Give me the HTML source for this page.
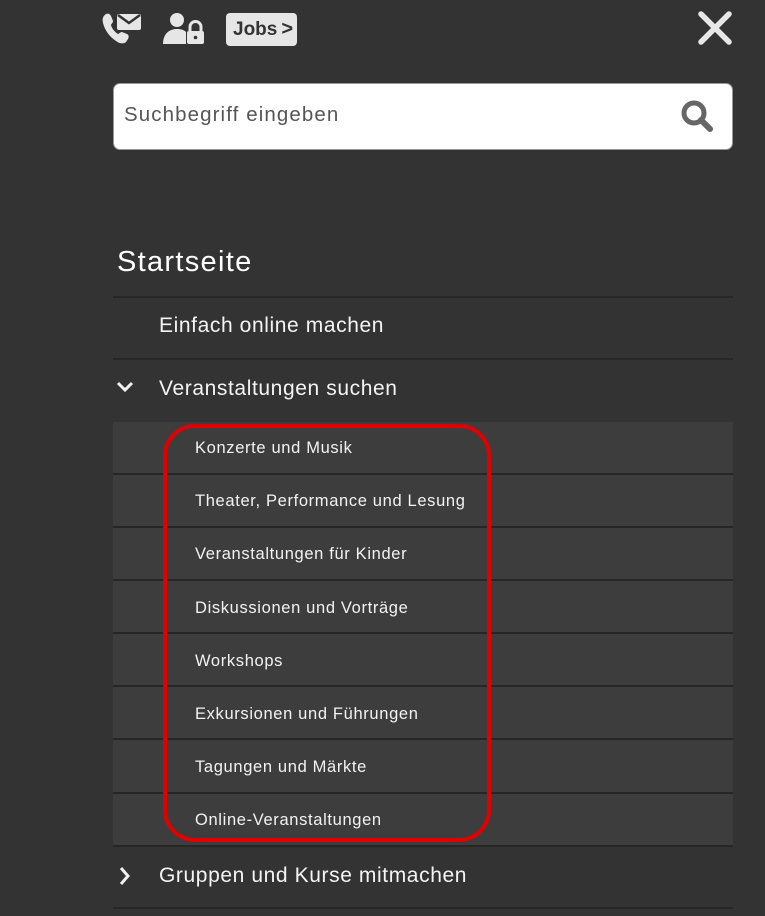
<!DOCTYPE html>
<html><head><meta charset="utf-8"><style>
*{margin:0;padding:0;box-sizing:border-box}
body{width:765px;height:916px;background:#333;font-family:"Liberation Sans",sans-serif;color:#fff;position:relative;overflow:hidden}
.a{position:absolute}
.sep{position:absolute;left:113px;width:620px;height:2px;background:#262626}
.m{position:absolute;left:159px;font-size:21px;letter-spacing:0.6px;color:#f4f4f4;line-height:24px}
.sub{position:absolute;left:113px;width:620px;background:#3d3d3d}
.s{position:absolute;left:195px;font-size:16.5px;letter-spacing:0.65px;color:#f2f2f2;line-height:20px}
</style></head><body>
<svg class="a" style="left:102px;top:12px" width="44" height="34" viewBox="0 0 44 34">
<path d="M4 2c2-1 4 0 5 2l2 5c0 2-2 3-2 4 1 4 4 7 7 9 1 0 2-2 4-2l5 2c2 1 2 3 1 5l-2 3c-2 2-6 2-10-1C8 25 3 19 1 11 0 7 1 4 4 2z" fill="#e6e6e6"/>
<rect x="15" y="2" width="24" height="16" rx="2" fill="#e6e6e6"/>
<path d="M16 3l11 8 11-8" stroke="#333" stroke-width="2.5" fill="none"/>
</svg>
<svg class="a" style="left:162px;top:12px" width="46" height="34" viewBox="0 0 46 34">
<circle cx="15" cy="8" r="7" fill="#e6e6e6"/>
<path d="M1 32c0-10 6-15 14-15 4 0 7 1 9 3v12z" fill="#e6e6e6"/>
<rect x="25" y="19" width="17" height="13" rx="2" fill="#e6e6e6"/>
<path d="M28 19v-4a5.5 5.5 0 0 1 11 0v4" stroke="#e6e6e6" stroke-width="3" fill="none"/>
<circle cx="33.5" cy="25.5" r="1.8" fill="#333"/>
</svg>
<div class="a" style="left:226px;top:13px;width:71px;height:33px;background:#e6e6e6;border-radius:4px;color:#333;font-weight:bold;font-size:19px;line-height:33px;padding-left:7px">Jobs<span style="font-size:20px;margin-left:4px">&gt;</span></div>
<svg class="a" style="left:697px;top:10px" width="36" height="36" viewBox="0 0 36 36"><path d="M4 4l28 28M32 4L4 32" stroke="#e8e8e8" stroke-width="5.5" stroke-linecap="round"/></svg>
<div class="a" style="left:113px;top:83px;width:620px;height:67px;background:#fff;border-radius:7px;border:1px solid #999"></div>
<div class="a" style="left:124px;top:103px;font-size:20.5px;letter-spacing:1.1px;color:#555;line-height:24px">Suchbegriff eingeben</div>
<svg class="a" style="left:680px;top:99px" width="36" height="34" viewBox="0 0 36 34"><circle cx="14" cy="14" r="10" stroke="#666" stroke-width="5" fill="none"/><path d="M21 21l9 9" stroke="#666" stroke-width="6" stroke-linecap="round"/></svg>
<div class="a" style="left:117px;top:245px;font-size:29px;letter-spacing:1.3px;line-height:34px;color:#fff">Startseite</div>
<div class="sep" style="top:296px"></div>
<div class="m" style="top:314px">Einfach online machen</div>
<div class="sep" style="top:358px"></div>
<svg class="a" style="left:116px;top:381px" width="18" height="12" viewBox="0 0 18 12"><path d="M2 2l7 7 7-7" stroke="#f0f0f0" stroke-width="3" fill="none"/></svg>
<div class="m" style="top:377px">Veranstaltungen suchen</div>
<div class="sub" style="top:422px;height:424px"></div>
<div class="sep" style="top:473px"></div>
<div class="sep" style="top:526px"></div>
<div class="sep" style="top:579px"></div>
<div class="sep" style="top:632px"></div>
<div class="sep" style="top:685px"></div>
<div class="sep" style="top:738px"></div>
<div class="sep" style="top:792px"></div>
<div class="s" style="top:438px">Konzerte und Musik</div>
<div class="s" style="top:491px">Theater, Performance und Lesung</div>
<div class="s" style="top:544px">Veranstaltungen für Kinder</div>
<div class="s" style="top:598px">Diskussionen und Vorträge</div>
<div class="s" style="top:651px">Workshops</div>
<div class="s" style="top:704px">Exkursionen und Führungen</div>
<div class="s" style="top:757px">Tagungen und Märkte</div>
<div class="s" style="top:810px">Online-Veranstaltungen</div>
<div class="sep" style="top:845px"></div>
<svg class="a" style="left:119px;top:866px" width="12" height="20" viewBox="0 0 12 20"><path d="M2 2l7 8-7 8" stroke="#f0f0f0" stroke-width="3" fill="none"/></svg>
<div class="m" style="top:864px">Gruppen und Kurse mitmachen</div>
<div class="sep" style="top:907px"></div>
<div class="a" style="left:163px;top:424px;width:328px;height:418px;border:4px solid #e00000;border-radius:32px"></div>
</body></html>
